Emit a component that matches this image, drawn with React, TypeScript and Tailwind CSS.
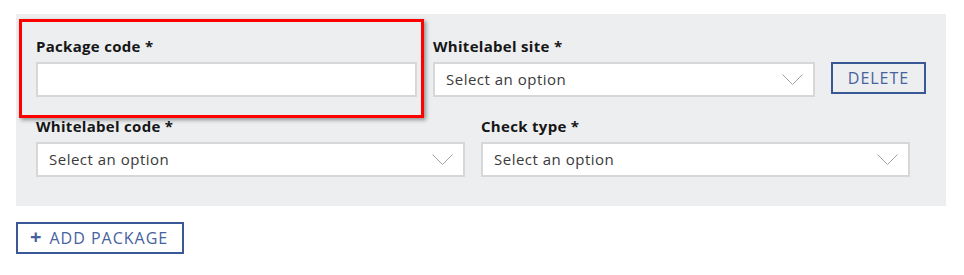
import React from "react";

function Chevron() {
  return (
    <svg width="21" height="11" viewBox="0 0 21 11" className="shrink-0">
      <path d="M0.5 0.5 L10.5 10.5 L20.5 0.5" fill="none" stroke="#a3a3a3" strokeWidth="1" />
    </svg>
  );
}

function Label({ children }: { children: React.ReactNode }) {
  return (
    <label className="block h-6 leading-6 text-[15px] font-bold tracking-[0.3px] text-[#161616]">
      {children}
    </label>
  );
}

function SelectField({ label, width }: { label: string; width: string }) {
  return (
    <div className={width}>
      <Label>{label}</Label>
      <div className="mt-1 h-[35px] bg-white border-2 border-[#d7d7d7] flex items-center justify-between pl-[11px] pr-[10px]">
        <span className="text-[15px] tracking-[0.5px] text-[#3a3a3a]">Select an option</span>
        <Chevron />
      </div>
    </div>
  );
}

export default function App() {
  return (
    <div
      className="min-h-screen bg-white pt-[14px] px-4"
      style={{ fontFamily: "'Open Sans', Lato, sans-serif" }}
    >
      {/* Package block */}
      <div className="relative w-[930px] bg-[#edeef0] px-5 pt-5 pb-[29px]">
        <div className="flex items-start gap-4">
          <div className="w-[381px]">
            <Label>Package code *</Label>
            <input
              type="text"
              className="mt-1 block w-full h-[35px] bg-white border-2 border-[#d7d7d7] outline-none px-[11px]"
            />
          </div>
          <SelectField label="Whitelabel site *" width="w-[382px]" />
          <button className="mt-[28px] w-[95px] h-[32px] border-2 border-[#3a5796] text-[#46629f] text-[16px] tracking-[1px]">
            DELETE
          </button>
        </div>

        <div className="flex items-start gap-4 mt-[17px]">
          <SelectField label="Whitelabel code *" width="w-[429px]" />
          <SelectField label="Check type *" width="w-[429px]" />
        </div>

        {/* highlight overlay */}
        <div className="absolute left-[3px] top-[5px] w-[405px] h-[99px] border-[3px] border-[#ff0000] shadow-[2px_2px_4px_rgba(0,0,0,0.4)] pointer-events-none" />
      </div>

      <button className="mt-4 w-[168px] h-[32px] border-2 border-[#3a5796] text-[#46629f] text-[16px] flex items-center gap-[7px] pl-[12px] tracking-[1px]">
        <span className="text-[20px] font-bold leading-none -mt-[2px]">+</span>
        <span>ADD PACKAGE</span>
      </button>
    </div>
  );
}
